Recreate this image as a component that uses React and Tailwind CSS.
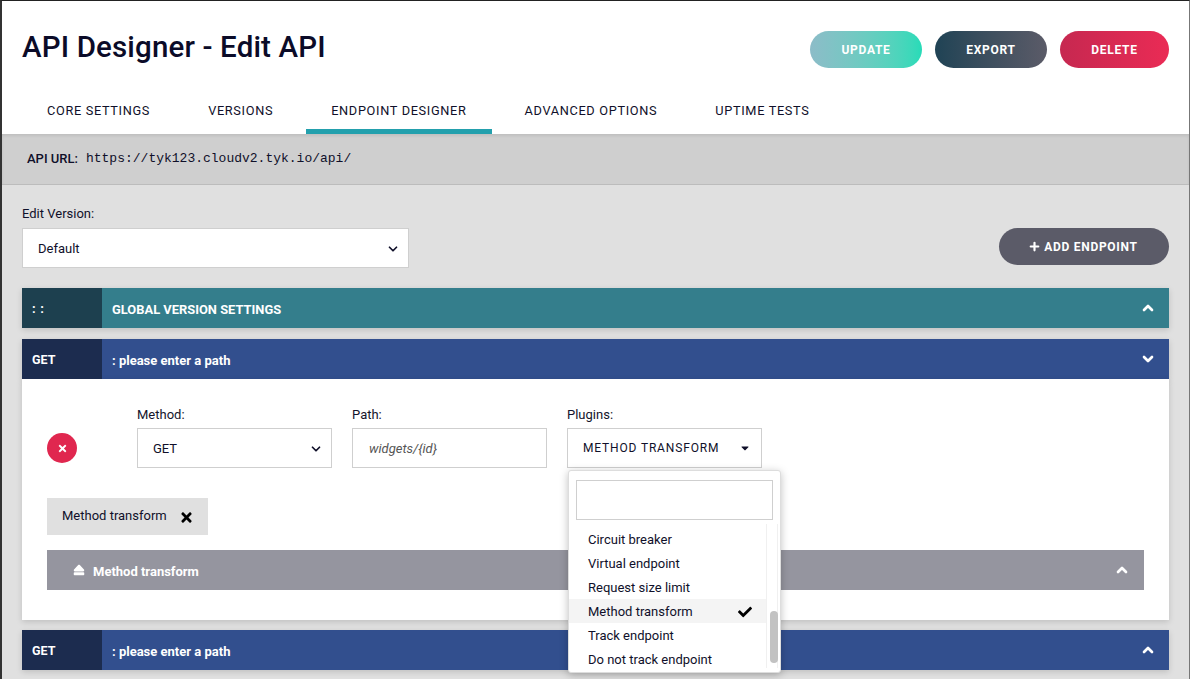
import { ChevronDown, ChevronUp, Plus } from "lucide-react";
import { FaCheck, FaTimes, FaEject, FaCaretDown } from "react-icons/fa";

const tabs = ["CORE SETTINGS", "VERSIONS", "ENDPOINT DESIGNER", "ADVANCED OPTIONS", "UPTIME TESTS"];
const plugins = ["Circuit breaker", "Virtual endpoint", "Request size limit", "Method transform", "Track endpoint", "Do not track endpoint"];

const Pill = ({ className, children }) => (
  <button className={`h-[37px] rounded-full text-white text-[12px] font-bold tracking-[0.06em] flex items-center justify-center ${className}`}>
    {children}
  </button>
);

const Bar = ({ left, leftColor, color, title, titleClass = "", leftClass = "", open, mb = "mb-[11px]" }) => (
  <div className={`h-10 flex items-stretch text-white text-[13px] font-bold shadow-[0_2px_6px_rgba(0,0,0,0.15)] ${color} ${mb}`}>
    <div className={`w-20 pl-[10px] flex items-center ${leftColor} ${leftClass}`}>{left}</div>
    <div className={`flex-1 pl-[10px] flex items-center ${titleClass}`}>{title}</div>
    <div className="w-[29px] flex items-center">
      {open ? <ChevronUp size={16} strokeWidth={4} /> : <ChevronDown size={16} strokeWidth={4} />}
    </div>
  </div>
);

const Field = ({ label, width = "w-[195px]", children }) => (
  <div className={width}>
    <div className="text-[13px] leading-[16px] h-[21px] text-[#14142b]">{label}</div>
    {children}
  </div>
);

const App = () => {
  return (
    <div className="w-[1190px] h-[679px] overflow-hidden bg-[#e0e0e0] border-t border-t-[#222] border-l-2 border-l-[#333] border-r border-r-[#777] font-['Roboto',sans-serif] text-[#10102a]">
      <div className="h-[133px] bg-white">
        <div className="h-[94px] pl-5 pr-5 flex items-center justify-between">
          <h1 className="text-[29.5px] font-medium tracking-[0.005em] mt-[-2px] text-[#0b0b28]">API Designer - Edit API</h1>
          <div className="flex gap-[13px] mt-[3px]">
            <Pill className="w-28 bg-gradient-to-r from-[#8cbcc8] to-[#26dbb8]">UPDATE</Pill>
            <Pill className="w-28 bg-gradient-to-r from-[#1f4355] to-[#5b5b68]">EXPORT</Pill>
            <Pill className="w-[109px] bg-gradient-to-r from-[#c62850] to-[#ea2b55]">DELETE</Pill>
          </div>
        </div>
        <div className="pl-5 flex gap-2 h-[39px]">
          {tabs.map((t) => (
            <div
              key={t}
              className={`px-[25px] pb-[2px] text-[12.75px] tracking-[0.0525em] flex items-center border-b-[5px] ${t === "ENDPOINT DESIGNER" ? "border-[#23a0ad]" : "border-transparent"}`}
            >
              {t}
            </div>
          ))}
        </div>
      </div>

      <div className="h-[51px] bg-[#cfcfcf] border-b border-[#bcbcbc] pl-[25px] flex items-center text-[13px] shadow-[inset_0_2px_3px_rgba(0,0,0,0.08)]">
        <span className="font-medium">API URL:</span>
        <span className="ml-2 font-['Liberation_Mono',monospace] text-[13px]">https://tyk123.cloudv2.tyk.io/api/</span>
      </div>

      <div className="px-5 pt-[21px]">
        <div className="flex items-end justify-between mb-5">
          <div>
            <div className="text-[13px] leading-[16px] mb-[6px]">Edit Version:</div>
            <div className="w-[387px] h-10 bg-white border border-[#cfcfcf] pl-[15px] pr-[8px] pt-[1px] flex items-center justify-between text-[13px]">
              Default
              <ChevronDown size={14} strokeWidth={3} />
            </div>
          </div>
          <button className="w-[170px] h-[37px] mb-[3px] rounded-full bg-[#5b5b68] text-white text-[12px] font-bold tracking-[0.06em] flex items-center justify-center gap-[3px] pr-[2px]">
            <Plus size={13} strokeWidth={4} />
            ADD ENDPOINT
          </button>
        </div>

        <Bar left=": :" leftColor="bg-[#1d404f]" leftClass="tracking-[0.05em] pt-[2px]" color="bg-[#347e8c]" title="GLOBAL VERSION SETTINGS" titleClass="text-[12.9px] pt-[3px]" open />
        <Bar left="GET" leftColor="bg-[#1c2c4f]" leftClass="text-[12.5px] pt-[2px]" color="bg-[#324f8e]" title=": please enter a path" titleClass="pt-[3px]" mb="mb-0" />

        <div className="h-[241px] bg-white mb-[10px] px-[25px] pt-[28px] shadow-[0_2px_6px_rgba(0,0,0,0.15)]">
          <div className="flex">
            <div className="w-[90px] pt-[26px]">
              <div className="w-[30px] h-[30px] rounded-full bg-[#e0274f] text-white flex items-center justify-center">
                <FaTimes size={11} />
              </div>
            </div>
            <div className="flex gap-5">
              <Field label="Method:">
                <div className="h-10 border border-[#cfcfcf] pl-[15px] pr-[8px] pt-[1px] flex items-center justify-between text-[13px]">
                  GET
                  <ChevronDown size={14} strokeWidth={3} />
                </div>
              </Field>
              <Field label="Path:">
                <div className="h-10 border border-[#cfcfcf] pl-[16px] pt-[1px] flex items-center text-[13px] italic text-[#555]">widgets/{"{id}"}</div>
              </Field>
              <Field label="Plugins:">
                <div className="relative">
                  <div className="h-10 border border-[#cfcfcf] pl-[15px] pr-[10px] flex items-center justify-between text-[12px] tracking-[0.07em]">
                    METHOD TRANSFORM
                    <FaCaretDown size={12} />
                  </div>
                  <div className="absolute z-10 left-px top-[42px] w-[213px] h-[203px] bg-white rounded-[3px] border border-[#ddd] shadow-[0_2px_8px_rgba(0,0,0,0.25)]">
                    <div className="mx-[7px] mt-[9px] h-10 border border-[#cfcfcf]"></div>
                    <div className="flex mt-[4px]">
                      <div className="w-[197px] pt-[3px]">
                        {plugins.map((p) => (
                          <div
                            key={p}
                            className={`h-6 pl-[19px] pr-[14px] pt-[1px] flex items-center justify-between text-[13px] ${p === "Method transform" ? "bg-[#f4f4f4]" : ""}`}
                          >
                            {p}
                            {p === "Method transform" && <FaCheck size={14} className="text-black" />}
                          </div>
                        ))}
                      </div>
                      <div className="w-[12px] h-[144px] border-l border-r border-[#f0f0f0] relative">
                        <div className="absolute left-[3px] top-[87px] w-2 h-[52px] rounded bg-[#c2c2c2]"></div>
                      </div>
                    </div>
                  </div>
                </div>
              </Field>
            </div>
          </div>

          <div className="w-[161px] h-[37px] mt-[30px] bg-[#e0e0e0] pl-[15px] flex items-center text-[13px]">
            <span className="pb-[2px]">Method transform</span>
            <FaTimes size={15} className="ml-[12px] mt-[1px] text-black" />
          </div>

          <div className="h-10 mt-[15px] bg-[#95959f] text-white text-[13px] font-bold flex items-center justify-between pl-[26px] pr-[14px]">
            <span className="flex items-center gap-2 pt-[3px]">
              <FaEject size={12} className="mb-[4px]" />
              Method transform
            </span>
            <ChevronUp size={16} strokeWidth={4} />
          </div>
        </div>

        <Bar left="GET" leftColor="bg-[#1c2c4f]" leftClass="text-[12.5px] pt-[2px]" color="bg-[#324f8e]" title=": please enter a path" titleClass="pt-[3px]" open mb="mb-0" />
      </div>
    </div>
  );
};

export default App;
